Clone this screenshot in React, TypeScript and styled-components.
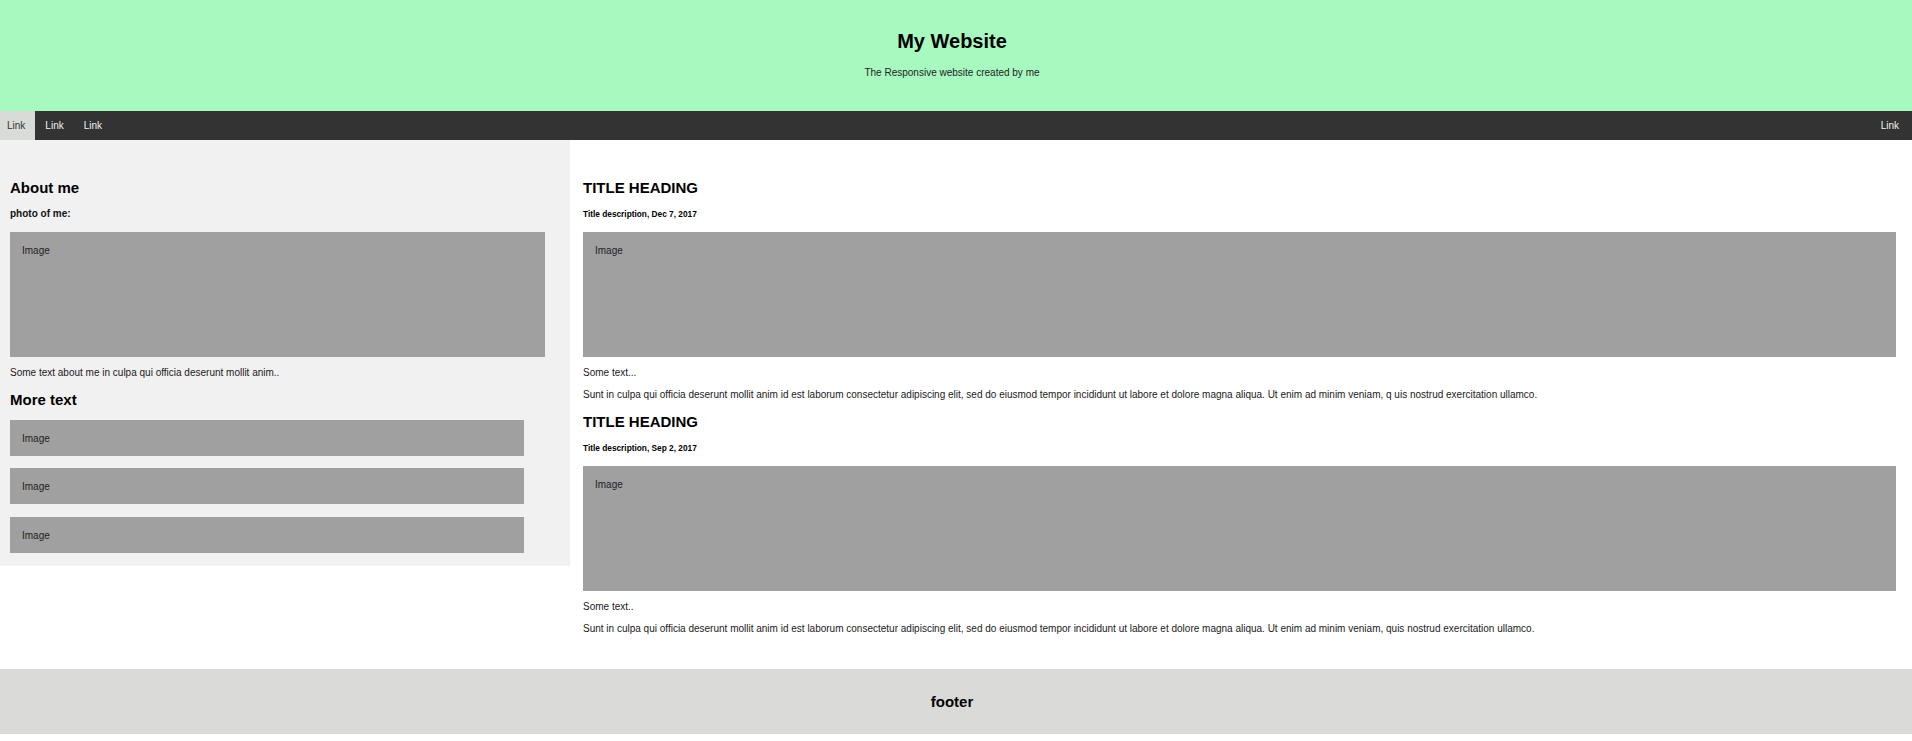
import React, {Fragment} from 'react';
import styled, {createGlobalStyle} from 'styled-components';

const GlobalStyle = createGlobalStyle`
  html, body {
    margin: 0;
    padding: 0;
    background: #ffffff;
  }
  body {
    font-family: "Liberation Sans", Arial, sans-serif;
    font-size: 10px;
    color: #111;
  }
  * { box-sizing: border-box; }
`;

const Header = styled.header`
  background: #a8f9c0;
  height: 111px;
  padding: 30px 8px 0 0;
  text-align: center;
  > h1 {
    margin: 0 0 14.4px;
    font-size: 20px;
    line-height: 23px;
    font-weight: bold;
    color: #000;
  }
  > p {
    margin: 0;
    font-size: 10px;
    line-height: 11.5px;
    color: #222;
  }
`;

const TopNav = styled.nav`
  display: flex;
  background: #333;
  height: 29px;
  padding-right: 3px;
`;

const NavLink = styled.a<{$active?: boolean; $right?: boolean}>`
  display: block;
  padding: 0 10px 0 ${p => (p.$active ? '7px' : '10px')};
  line-height: 29px;
  font-size: 10px;
  text-decoration: none;
  color: ${p => (p.$active ? '#333' : '#f2f2f2')};
  background: ${p => (p.$active ? '#d8dbd8' : 'transparent')};
  margin-left: ${p => (p.$right ? 'auto' : '0')};
`;

const Row = styled.div`
  display: flex;
  align-items: flex-start;
`;

const SideColumn = styled.aside`
  flex: 0 0 570px;
  background: #f1f1f1;
  padding: 38.5px 10px 13px;
`;

const MainColumn = styled.main`
  flex: 1;
  padding: 38.5px 16px 34px 13px;
`;

const Heading = styled.h2`
  margin: 0;
  font-size: 15px;
  line-height: 17px;
  font-weight: bold;
  color: #000;
  &:not(:first-child) {
    margin-top: 12.3px;
  }
`;

const Label = styled.h4`
  margin: 12.5px 0 12px;
  font-size: 10px;
  line-height: 12px;
  font-weight: bold;
  color: #111;
`;

const DateLine = styled.h5`
  margin: 13px 0;
  font-size: 8.3px;
  line-height: 10px;
  font-weight: bold;
  color: #000;
`;

const Text = styled.p`
  margin: 10px 0 0;
  font-size: 10px;
  line-height: 12px;
  color: #1a1a1a;
`;

const FakeImage = styled.div<{$tall?: boolean; $inset?: number}>`
  background: #a0a0a0;
  color: #222;
  font-size: 10px;
  line-height: 12px;
  padding: 13px 12px 0;
  height: ${p => (p.$tall ? '125px' : '36px')};
  margin-right: ${p => p.$inset ?? 0}px;
`;

const ImageList = styled.div`
  display: flex;
  flex-direction: column;
  gap: 12.5px;
  margin-top: 11.6px;
`;

const Post = styled.article`
  & + & {
    margin-top: 12.6px;
  }
`;

const Footer = styled.footer`
  background: #dadad8;
  padding: 24px 32px 24px 24px;
  text-align: center;
  > h2 {
    margin: 0;
    font-size: 15px;
    line-height: 17px;
    font-weight: bold;
    color: #000;
  }
`;

const posts = [
  {
    date: 'Title description, Dec 7, 2017',
    lead: 'Some text...',
    body: 'Sunt in culpa qui officia deserunt mollit anim id est laborum consectetur adipiscing elit, sed do eiusmod tempor incididunt ut labore et dolore magna aliqua. Ut enim ad minim veniam, q uis nostrud exercitation ullamco.'
  },
  {
    date: 'Title description, Sep 2, 2017',
    lead: 'Some text..',
    body: 'Sunt in culpa qui officia deserunt mollit anim id est laborum consectetur adipiscing elit, sed do eiusmod tempor incididunt ut labore et dolore magna aliqua. Ut enim ad minim veniam, quis nostrud exercitation ullamco.'
  }
];

function App() {
  return (
    <Fragment>
      <GlobalStyle/>
      <Header>
        <h1>My Website</h1>
        <p>The Responsive website created by me</p>
      </Header>
      <TopNav>
        <NavLink href="#" $active>Link</NavLink>
        <NavLink href="#">Link</NavLink>
        <NavLink href="#">Link</NavLink>
        <NavLink href="#" $right>Link</NavLink>
      </TopNav>
      <Row>
        <SideColumn>
          <Heading>About me</Heading>
          <Label>photo of me:</Label>
          <FakeImage $tall $inset={15}>Image</FakeImage>
          <Text>Some text about me in culpa qui officia deserunt mollit anim..</Text>
          <Heading>More text</Heading>
          <ImageList>
            <FakeImage $inset={36}>Image</FakeImage>
            <FakeImage $inset={36}>Image</FakeImage>
            <FakeImage $inset={36}>Image</FakeImage>
          </ImageList>
        </SideColumn>
        <MainColumn>
          {posts.map(post => (
            <Post key={post.date}>
              <Heading>TITLE HEADING</Heading>
              <DateLine>{post.date}</DateLine>
              <FakeImage $tall>Image</FakeImage>
              <Text>{post.lead}</Text>
              <Text>{post.body}</Text>
            </Post>
          ))}
        </MainColumn>
      </Row>
      <Footer>
        <h2>footer</h2>
      </Footer>
    </Fragment>
  );
}

export default App;
